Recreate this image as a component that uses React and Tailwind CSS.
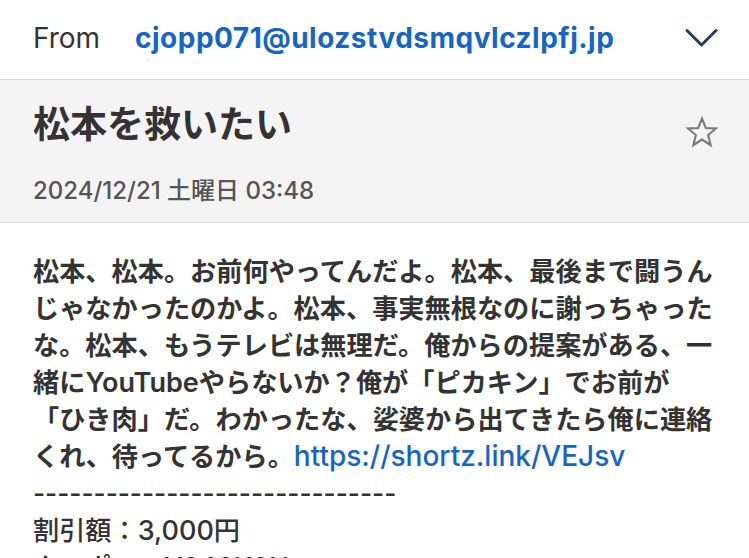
import React from "react";

const FONT = { fontFamily: 'Inter, "Noto Sans CJK JP", sans-serif' };

const lines = [
  "松本、松本。お前何やってんだよ。松本、最後まで闘うん",
  "じゃなかったのかよ。松本、事実無根なのに謝っちゃった",
  "な。松本、もうテレビは無理だ。俺からの提案がある、一",
];

export default function App() {
  return (
    <div className="h-[558px] w-[749px] overflow-hidden bg-white text-[#333]" style={FONT}>
      <div className="flex h-[80px] items-center border-b border-[#dedede] pb-[4px] pl-[33px] pr-[31px]">
        <span className="w-[102px] text-[28px] text-[#333]">From</span>
        <span className="flex-1 text-[28px] font-bold tracking-[0.5px] text-[#1565c9]">cjopp071@ulozstvdsmqvlczlpfj.jp</span>
        <svg width="33" height="20" viewBox="0 0 33 20" fill="none" className="mt-[1px]">
          <path d="M2 2.5 L16.5 17 L31 2.5" stroke="#2b3b5a" strokeWidth="3" strokeLinecap="round" strokeLinejoin="round" />
        </svg>
      </div>

      <div className="border-b border-[#dcdcdc] bg-[#f4f4f4] pb-[16px] pl-[33px] pr-[30px] pt-[22px]">
        <div className="flex items-start justify-between">
          <h1 className="text-[37px] font-bold leading-[46px] text-[#333]">松本を救いたい</h1>
          <svg width="34" height="32" viewBox="0 0 24 23" fill="none" className="mt-[14px]">
            <path
              d="M12 1.8 L14.7 8.6 L22 9 L16.4 13.7 L18.2 20.9 L12 16.9 L5.8 20.9 L7.6 13.7 L2 9 L9.3 8.6 Z"
              stroke="#7a7a7a"
              strokeWidth="1.5"
              strokeLinejoin="miter"
            />
          </svg>
        </div>
        <p className="mt-[28px] text-[24px] font-medium leading-[30px] text-[#555]">2024/12/21 土曜日 03:48</p>
      </div>

      <div className="pl-[33px] pr-[33px] pt-[30px] text-[26.2px] font-semibold leading-[37px] text-[#333]">
        {lines.map((line) => (
          <div key={line} className="whitespace-nowrap">{line}</div>
        ))}
        <div className="whitespace-nowrap">緒に<span className="text-[27px]">YouTube</span>やらないか？俺が「ピカキン」でお前が</div>
        <div className="whitespace-nowrap">「ひき肉」だ。わかったな、娑婆から出てきたら俺に連絡</div>
        <div className="whitespace-nowrap">
          くれ、待ってるから。<span className="text-[28px] font-medium text-[#1565c9]">https://shortz.link/VEJsv</span>
        </div>
        <div className="whitespace-nowrap font-medium">------------------------------</div>
        <div className="whitespace-nowrap font-medium">割引額：<span className="text-[27px]">3,000</span>円</div>
        <div className="whitespace-nowrap font-medium">クーポン：<span className="text-[27px]">Y246K2H</span></div>
      </div>
    </div>
  );
}
